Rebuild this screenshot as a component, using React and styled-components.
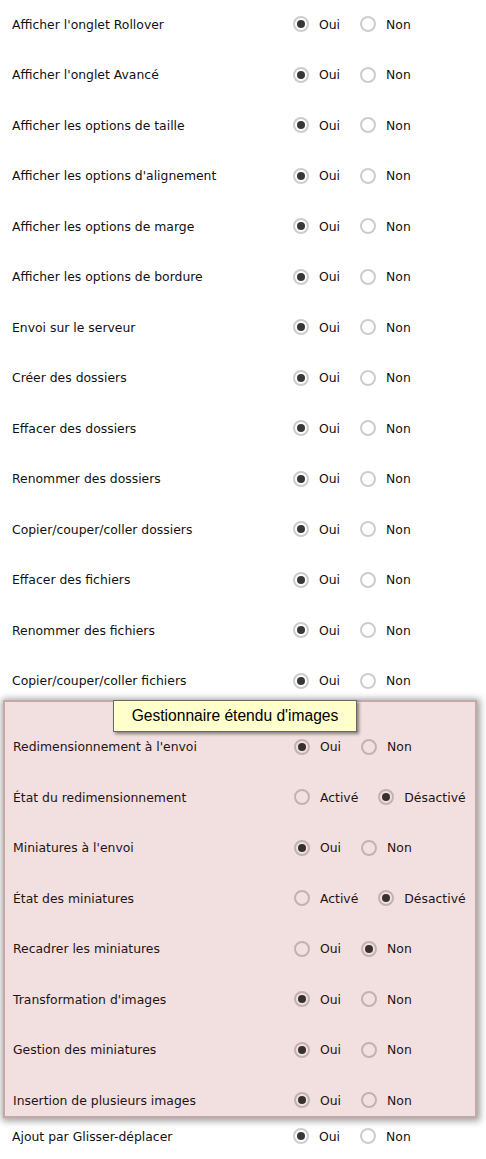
import React from "react";
import styled, { createGlobalStyle } from "styled-components";

const GlobalStyle = createGlobalStyle`
  html, body {
    margin: 0;
    padding: 0;
    background: #fff;
  }
  body {
    font-family: "DejaVu Sans", Verdana, sans-serif;
    font-size: 12.4px;
    color: #111;
  }
`;

const Page = styled.div`
  width: 486px;
  padding-top: 15px;
  display: flex;
  flex-direction: column;
`;

const List = styled.div`
  display: flex;
  flex-direction: column;
  gap: 32.5px;
  padding-left: ${(p) => p.$indent ?? 12}px;
`;

const Row = styled.div`
  display: grid;
  grid-template-columns: 281px 1fr;
  align-items: center;
  height: 18px;
`;

const Label = styled.span`
  white-space: nowrap;
`;

const Choices = styled.div`
  display: flex;
  align-items: center;
  gap: 20px;
`;

const Choice = styled.label`
  display: flex;
  align-items: center;
  gap: 10px;
`;

const Radio = styled.span`
  box-sizing: border-box;
  width: 16px;
  height: 16px;
  border-radius: 50%;
  border: 2px solid rgba(0, 0, 0, 0.2);
  display: flex;
  align-items: center;
  justify-content: center;
  &::after {
    content: "";
    width: 8px;
    height: 8px;
    border-radius: 50%;
    background: ${(p) => (p.$on ? "rgba(0,0,0,0.78)" : "transparent")};
  }
`;

const Box = styled.section`
  margin: 10px 9px 9px 3px;
  background: #f2dfdf;
  border: 2px solid #c4a9a9;
  box-shadow: 1px 1px 7px 2px rgba(0, 0, 0, 0.38);
  padding: 0 0 7px 8px;
  color: #1f1414;
`;

const Heading = styled.div`
  margin: -2px 0 6px 100px;
  width: 244px;
  height: 32px;
  box-sizing: border-box;
  background: #ffffcc;
  border: 1px solid #6a6a6a;
  box-shadow: 2px 2px 3px rgba(0, 0, 0, 0.45);
  display: flex;
  align-items: center;
  justify-content: center;
  font-family: "Liberation Sans", Arial, sans-serif;
  font-size: 15.6px;
  color: #000;
`;

const Options = ({ values, checked }) => (
  <Choices>
    {values.map((v, i) => (
      <Choice key={v}>
        <Radio $on={i === checked} />
        {v}
      </Choice>
    ))}
  </Choices>
);

const yesNo = ["Oui", "Non"];
const onOff = ["Activé", "Désactivé"];

const main = [
  "Afficher l'onglet Rollover",
  "Afficher l'onglet Avancé",
  "Afficher les options de taille",
  "Afficher les options d'alignement",
  "Afficher les options de marge",
  "Afficher les options de bordure",
  "Envoi sur le serveur",
  "Créer des dossiers",
  "Effacer des dossiers",
  "Renommer des dossiers",
  "Copier/couper/coller dossiers",
  "Effacer des fichiers",
  "Renommer des fichiers",
  "Copier/couper/coller fichiers",
];

const extended = [
  ["Redimensionnement à l'envoi", yesNo, 0],
  ["État du redimensionnement", onOff, 1],
  ["Miniatures à l'envoi", yesNo, 0],
  ["État des miniatures", onOff, 1],
  ["Recadrer les miniatures", yesNo, 1],
  ["Transformation d'images", yesNo, 0],
  ["Gestion des miniatures", yesNo, 0],
  ["Insertion de plusieurs images", yesNo, 0],
];

export default function App() {
  return (
    <>
      <GlobalStyle />
      <Page>
        <List>
          {main.map((t) => (
            <Row key={t}>
              <Label>{t}</Label>
              <Options values={yesNo} checked={0} />
            </Row>
          ))}
        </List>
        <Box>
          <Heading>Gestionnaire étendu d'images</Heading>
          <List $indent={0}>
            {extended.map(([t, vals, c]) => (
              <Row key={t}>
                <Label>{t}</Label>
                <Options values={vals} checked={c} />
              </Row>
            ))}
          </List>
        </Box>
        <List>
          <Row>
            <Label>Ajout par Glisser-déplacer</Label>
            <Options values={yesNo} checked={0} />
          </Row>
        </List>
      </Page>
    </>
  );
}
